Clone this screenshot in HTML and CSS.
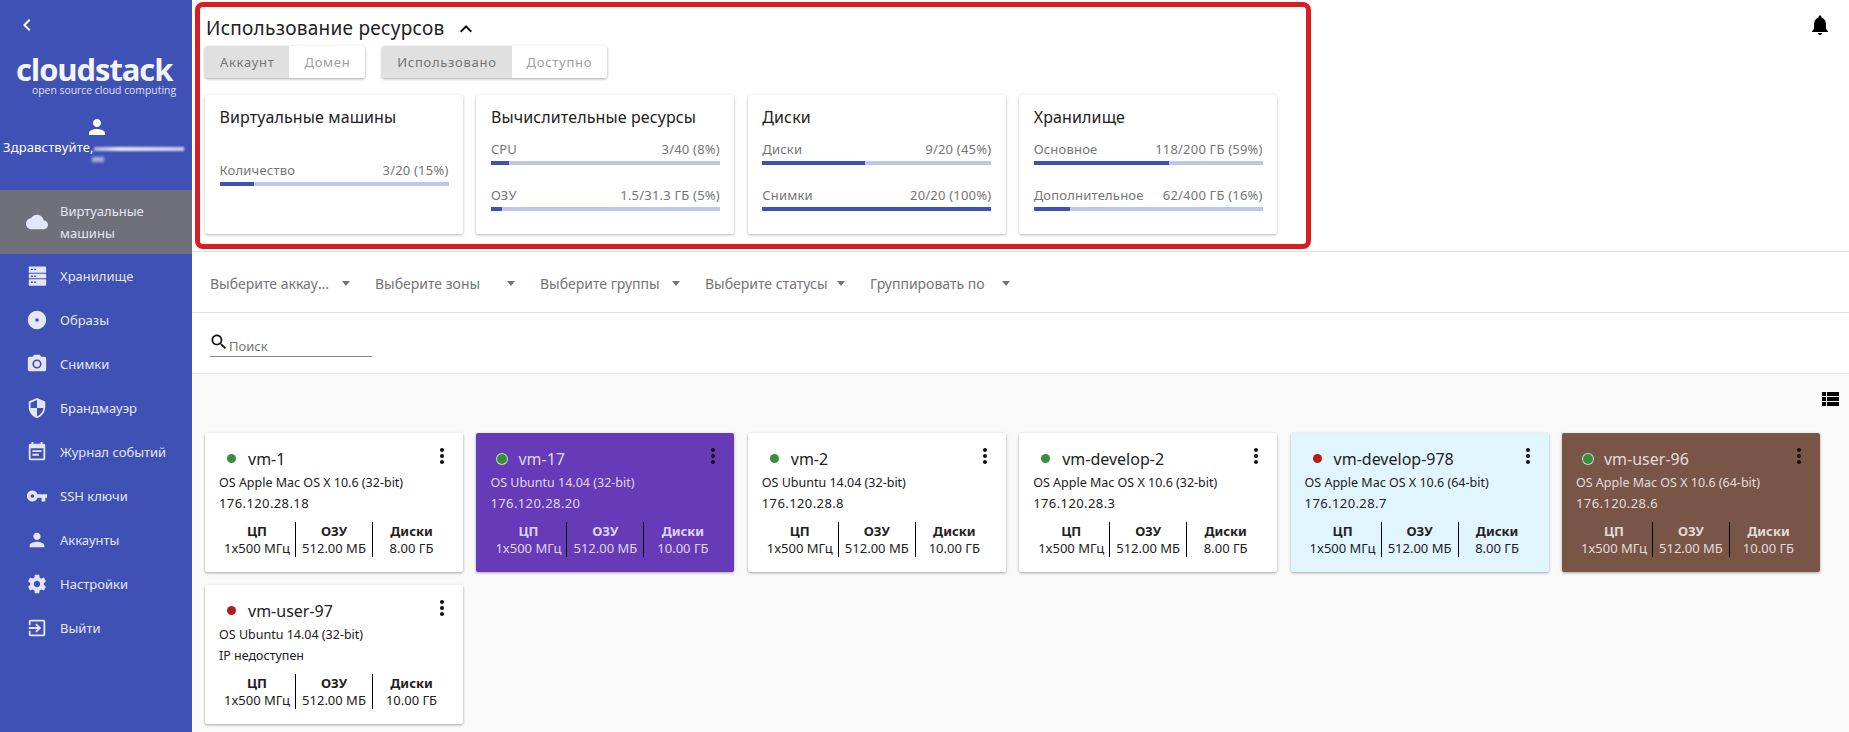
FILE: index.html
```html
<!DOCTYPE html>
<html lang="ru">
<head>
    <meta charset="UTF-8">
    <title>CloudStack</title>
    <link rel="stylesheet" href="styles.css">
</head>
<body>
    <aside class="sidebar">
        <svg class="back" viewBox="0 0 24 24"><path d="M15.41 7.41L14 6l-6 6 6 6 1.41-1.41L10.83 12z"/></svg>
        <div class="logo">cloudstack</div>
        <div class="logo-sub">open source cloud computing</div>
        <svg class="user-icon" viewBox="0 0 24 24"><path d="M12 12c2.21 0 4-1.79 4-4s-1.79-4-4-4-4 1.79-4 4 1.79 4 4 4zm0 2c-2.67 0-8 1.34-8 4v2h16v-2c0-2.66-5.33-4-8-4z"/></svg>
        <div class="hello">Здравствуйте, <span class="smear"></span></div>
        <div class="smear-small"></div>
        <nav class="nav">
            <a class="nav-item active">
                <svg viewBox="0 0 24 24"><path d="M19.35 10.04C18.67 6.59 15.64 4 12 4 9.11 4 6.6 5.64 5.35 8.04 2.34 8.36 0 10.91 0 14c0 3.31 2.69 6 6 6h13c2.76 0 5-2.24 5-5 0-2.64-2.05-4.78-4.65-4.96z"/></svg>
                <span>Виртуальные машины</span>
            </a>
            <a class="nav-item">
                <svg viewBox="0 0 24 24"><path fill-rule="evenodd" d="M4 1.5h17a1 1 0 0 1 1 1v5a1 1 0 0 1-1 1H4a1 1 0 0 1-1-1v-5a1 1 0 0 1 1-1zm1.5 2.5v1.5h2V4h-2zm3.5 0v1.5h2V4H9zM4 9.5h17a1 1 0 0 1 1 1v3a1 1 0 0 1-1 1H4a1 1 0 0 1-1-1v-3a1 1 0 0 1 1-1zm1.5 2v1.5h2v-1.5h-2zm3.5 0v1.5h2v-1.5H9zM4 15.5h17a1 1 0 0 1 1 1v5a1 1 0 0 1-1 1H4a1 1 0 0 1-1-1v-5a1 1 0 0 1 1-1zm1.5 2.5v1.5h2V18h-2zm3.5 0v1.5h2V18H9z"/></svg>
                <span>Хранилище</span>
            </a>
            <a class="nav-item">
                <svg viewBox="0 0 24 24"><path fill-rule="evenodd" d="M12 2C6.48 2 2 6.48 2 12s4.48 10 10 10 10-4.48 10-10S17.52 2 12 2zm0 8a2 2 0 1 1 0 4 2 2 0 0 1 0-4z"/></svg>
                <span>Образы</span>
            </a>
            <a class="nav-item">
                <svg viewBox="0 0 24 24"><circle cx="12" cy="12" r="3.2"/><path d="M9 2L7.17 4H4c-1.1 0-2 .9-2 2v12c0 1.1.9 2 2 2h16c1.1 0 2-.9 2-2V6c0-1.1-.9-2-2-2h-3.17L15 2H9zm3 15c-2.76 0-5-2.24-5-5s2.24-5 5-5 5 2.24 5 5-2.24 5-5 5z"/></svg>
                <span>Снимки</span>
            </a>
            <a class="nav-item">
                <svg viewBox="0 0 24 24"><path d="M12 1L3 5v6c0 5.55 3.84 10.74 9 12 5.16-1.26 9-6.45 9-12V5l-9-4zm0 10.99h7c-.53 4.12-3.28 7.79-7 8.94V12H5V6.3l7-3.11v8.8z"/></svg>
                <span>Брандмауэр</span>
            </a>
            <a class="nav-item">
                <svg viewBox="0 0 24 24"><path d="M17 10H7v2h10v-2zm2-7h-1V1h-2v2H8V1H6v2H5c-1.11 0-1.99.9-1.99 2L3 19c0 1.1.89 2 2 2h14c1.1 0 2-.9 2-2V5c0-1.1-.9-2-2-2zm0 16H5V8h14v11zm-5-5H7v2h7v-2z"/></svg>
                <span>Журнал событий</span>
            </a>
            <a class="nav-item">
                <svg viewBox="0 0 24 24"><path d="M12.65 10C11.83 7.67 9.61 6 7 6c-3.31 0-6 2.69-6 6s2.69 6 6 6c2.61 0 4.83-1.67 5.65-4H17v4h4v-4h2v-4H12.65zM7 14c-1.1 0-2-.9-2-2s.9-2 2-2 2 .9 2 2-.9 2-2 2z"/></svg>
                <span>SSH ключи</span>
            </a>
            <a class="nav-item">
                <svg viewBox="0 0 24 24"><path d="M12 12c2.21 0 4-1.79 4-4s-1.79-4-4-4-4 1.79-4 4 1.79 4 4 4zm0 2c-2.67 0-8 1.34-8 4v2h16v-2c0-2.66-5.33-4-8-4z"/></svg>
                <span>Аккаунты</span>
            </a>
            <a class="nav-item">
                <svg viewBox="0 0 24 24"><path d="M19.43 12.98c.04-.32.07-.64.07-.98s-.03-.66-.07-.98l2.11-1.65c.19-.15.24-.42.12-.64l-2-3.46c-.12-.22-.39-.3-.61-.22l-2.49 1c-.52-.4-1.08-.73-1.69-.98l-.38-2.65C14.46 2.18 14.25 2 14 2h-4c-.25 0-.46.18-.49.42l-.38 2.65c-.61.25-1.17.59-1.69.98l-2.49-1c-.23-.09-.49 0-.61.22l-2 3.46c-.13.22-.07.49.12.64l2.11 1.65c-.04.32-.07.65-.07.98s.03.66.07.98l-2.11 1.65c-.19.15-.24.42-.12.64l2 3.46c.12.22.39.3.61.22l2.49-1c.52.4 1.08.73 1.69.98l.38 2.65c.03.24.24.42.49.42h4c.25 0 .46-.18.49-.42l.38-2.65c.61-.25 1.17-.59 1.69-.98l2.49 1c.23.09.49 0 .61-.22l2-3.46c.12-.22.07-.49-.12-.64l-2.11-1.65zM12 15.5c-1.93 0-3.5-1.57-3.5-3.5s1.57-3.5 3.5-3.5 3.5 1.57 3.5 3.5-1.57 3.5-3.5 3.5z"/></svg>
                <span>Настройки</span>
            </a>
            <a class="nav-item">
                <svg viewBox="0 0 24 24"><path d="M10.09 15.59L11.5 17l5-5-5-5-1.41 1.41L12.67 11H3v2h9.67l-2.58 2.59zM19 3H5c-1.11 0-2 .9-2 2v4h2V5h14v14H5v-4H3v4c0 1.1.89 2 2 2h14c1.1 0 2-.9 2-2V5c0-1.1-.9-2-2-2z"/></svg>
                <span>Выйти</span>
            </a>
        </nav>
    </aside>

    <main class="main">
        <section class="usage">
            <div class="annotation"></div>
            <div class="usage-head">
                <h2 class="usage-title">Использование ресурсов</h2>
                <svg class="chevron" viewBox="0 0 24 24"><path d="M12 8l-6 6 1.41 1.41L12 10.83l4.59 4.58L18 14z"/></svg>
                <svg class="bell" viewBox="0 0 24 24"><path d="M12 22c1.1 0 2-.9 2-2h-4c0 1.1.89 2 2 2zm6-6v-5c0-3.07-1.64-5.64-4.5-6.32V4c0-.83-.67-1.5-1.5-1.5s-1.5.67-1.5 1.5v.68C7.63 5.36 6 7.92 6 11v5l-2 2v1h16v-1l-2-2z"/></svg>
            </div>
            <div class="toggles">
                <div class="toggle-group">
                    <span class="toggle toggle-on">Аккаунт</span>
                    <span class="toggle">Домен</span>
                </div>
                <div class="toggle-group">
                    <span class="toggle toggle-on">Использовано</span>
                    <span class="toggle">Доступно</span>
                </div>
            </div>
            <div class="res-cards">
                <div class="res-card">
                    <h3 class="res-title">Виртуальные машины</h3>
                    <div class="meter meter-single">
                        <div class="meter-label"><span>Количество</span><span>3/20 (15%)</span></div>
                        <div class="meter-bar"><div class="meter-fill" style="width: 15%"></div></div>
                    </div>
                </div>
                <div class="res-card">
                    <h3 class="res-title">Вычислительные ресурсы</h3>
                    <div class="meter">
                        <div class="meter-label"><span>CPU</span><span>3/40 (8%)</span></div>
                        <div class="meter-bar"><div class="meter-fill" style="width: 8%"></div></div>
                    </div>
                    <div class="meter">
                        <div class="meter-label"><span>ОЗУ</span><span>1.5/31.3 ГБ (5%)</span></div>
                        <div class="meter-bar"><div class="meter-fill" style="width: 5%"></div></div>
                    </div>
                </div>
                <div class="res-card">
                    <h3 class="res-title">Диски</h3>
                    <div class="meter">
                        <div class="meter-label"><span>Диски</span><span>9/20 (45%)</span></div>
                        <div class="meter-bar"><div class="meter-fill" style="width: 45%"></div></div>
                    </div>
                    <div class="meter">
                        <div class="meter-label"><span>Снимки</span><span>20/20 (100%)</span></div>
                        <div class="meter-bar"><div class="meter-fill" style="width: 100%"></div></div>
                    </div>
                </div>
                <div class="res-card">
                    <h3 class="res-title">Хранилище</h3>
                    <div class="meter">
                        <div class="meter-label"><span>Основное</span><span>118/200 ГБ (59%)</span></div>
                        <div class="meter-bar"><div class="meter-fill" style="width: 59%"></div></div>
                    </div>
                    <div class="meter">
                        <div class="meter-label"><span>Дополнительное</span><span>62/400 ГБ (16%)</span></div>
                        <div class="meter-bar"><div class="meter-fill" style="width: 16%"></div></div>
                    </div>
                </div>
            </div>
        </section>

        <section class="filters">
            <div class="filter"><span class="filter-text">Выберите аккаунты</span><i class="caret"></i></div>
            <div class="filter"><span class="filter-text">Выберите зоны</span><i class="caret"></i></div>
            <div class="filter"><span class="filter-text">Выберите группы</span><i class="caret"></i></div>
            <div class="filter"><span class="filter-text">Выберите статусы</span><i class="caret"></i></div>
            <div class="filter"><span class="filter-text">Группировать по</span><i class="caret"></i></div>
        </section>

        <section class="search-row">
            <div class="search">
                <svg viewBox="0 0 24 24"><path d="M15.5 14h-.79l-.28-.27C15.41 12.59 16 11.11 16 9.5 16 5.91 13.09 3 9.5 3S3 5.91 3 9.5 5.91 16 9.5 16c1.61 0 3.09-.59 4.23-1.57l.27.28v.79l5 4.99L20.49 19l-4.99-5zm-6 0C7.01 14 5 11.99 5 9.5S7.01 5 9.5 5 14 7.01 14 9.5 11.99 14 9.5 14z"/></svg>
                <span>Поиск</span>
            </div>
        </section>

        <section class="vm-area">
            <div class="view-bar">
                <svg viewBox="0 0 24 24"><path d="M4 14h4v-4H4v4zm0 5h4v-4H4v4zm0-10h4V5H4v4zm5 5h12v-4H9v4zm0 5h12v-4H9v4zM9 5v4h12V5H9z"/></svg>
            </div>
            <div class="vm-list">
                <div class="vm-card">
                    <div class="vm-head">
                        <i class="dot dot-on"></i><span class="vm-name">vm-1</span>
                        <svg class="more" viewBox="0 0 24 24"><path d="M12 8c1.1 0 2-.9 2-2s-.9-2-2-2-2 .9-2 2 .9 2 2 2zm0 2c-1.1 0-2 .9-2 2s.9 2 2 2 2-.9 2-2-.9-2-2-2zm0 6c-1.1 0-2 .9-2 2s.9 2 2 2 2-.9 2-2-.9-2-2-2z"/></svg>
                    </div>
                    <div class="vm-line">OS Apple Mac OS X 10.6 (32-bit)</div>
                    <div class="vm-line vm-ip">176.120.28.18</div>
                    <div class="vm-stats">
                        <div class="stat"><b>ЦП</b><span>1x500 МГц</span></div>
                        <div class="stat"><b>ОЗУ</b><span>512.00 МБ</span></div>
                        <div class="stat"><b>Диски</b><span>8.00 ГБ</span></div>
                    </div>
                </div>
                <div class="vm-card vm-purple">
                    <div class="vm-head">
                        <i class="dot dot-on"></i><span class="vm-name">vm-17</span>
                        <svg class="more" viewBox="0 0 24 24"><path d="M12 8c1.1 0 2-.9 2-2s-.9-2-2-2-2 .9-2 2 .9 2 2 2zm0 2c-1.1 0-2 .9-2 2s.9 2 2 2 2-.9 2-2-.9-2-2-2zm0 6c-1.1 0-2 .9-2 2s.9 2 2 2 2-.9 2-2-.9-2-2-2z"/></svg>
                    </div>
                    <div class="vm-line">OS Ubuntu 14.04 (32-bit)</div>
                    <div class="vm-line vm-ip">176.120.28.20</div>
                    <div class="vm-stats">
                        <div class="stat"><b>ЦП</b><span>1x500 МГц</span></div>
                        <div class="stat"><b>ОЗУ</b><span>512.00 МБ</span></div>
                        <div class="stat"><b>Диски</b><span>10.00 ГБ</span></div>
                    </div>
                </div>
                <div class="vm-card">
                    <div class="vm-head">
                        <i class="dot dot-on"></i><span class="vm-name">vm-2</span>
                        <svg class="more" viewBox="0 0 24 24"><path d="M12 8c1.1 0 2-.9 2-2s-.9-2-2-2-2 .9-2 2 .9 2 2 2zm0 2c-1.1 0-2 .9-2 2s.9 2 2 2 2-.9 2-2-.9-2-2-2zm0 6c-1.1 0-2 .9-2 2s.9 2 2 2 2-.9 2-2-.9-2-2-2z"/></svg>
                    </div>
                    <div class="vm-line">OS Ubuntu 14.04 (32-bit)</div>
                    <div class="vm-line vm-ip">176.120.28.8</div>
                    <div class="vm-stats">
                        <div class="stat"><b>ЦП</b><span>1x500 МГц</span></div>
                        <div class="stat"><b>ОЗУ</b><span>512.00 МБ</span></div>
                        <div class="stat"><b>Диски</b><span>10.00 ГБ</span></div>
                    </div>
                </div>
                <div class="vm-card">
                    <div class="vm-head">
                        <i class="dot dot-on"></i><span class="vm-name">vm-develop-2</span>
                        <svg class="more" viewBox="0 0 24 24"><path d="M12 8c1.1 0 2-.9 2-2s-.9-2-2-2-2 .9-2 2 .9 2 2 2zm0 2c-1.1 0-2 .9-2 2s.9 2 2 2 2-.9 2-2-.9-2-2-2zm0 6c-1.1 0-2 .9-2 2s.9 2 2 2 2-.9 2-2-.9-2-2-2z"/></svg>
                    </div>
                    <div class="vm-line">OS Apple Mac OS X 10.6 (32-bit)</div>
                    <div class="vm-line vm-ip">176.120.28.3</div>
                    <div class="vm-stats">
                        <div class="stat"><b>ЦП</b><span>1x500 МГц</span></div>
                        <div class="stat"><b>ОЗУ</b><span>512.00 МБ</span></div>
                        <div class="stat"><b>Диски</b><span>8.00 ГБ</span></div>
                    </div>
                </div>
                <div class="vm-card vm-blue">
                    <div class="vm-head">
                        <i class="dot dot-off"></i><span class="vm-name">vm-develop-978</span>
                        <svg class="more" viewBox="0 0 24 24"><path d="M12 8c1.1 0 2-.9 2-2s-.9-2-2-2-2 .9-2 2 .9 2 2 2zm0 2c-1.1 0-2 .9-2 2s.9 2 2 2 2-.9 2-2-.9-2-2-2zm0 6c-1.1 0-2 .9-2 2s.9 2 2 2 2-.9 2-2-.9-2-2-2z"/></svg>
                    </div>
                    <div class="vm-line">OS Apple Mac OS X 10.6 (64-bit)</div>
                    <div class="vm-line vm-ip">176.120.28.7</div>
                    <div class="vm-stats">
                        <div class="stat"><b>ЦП</b><span>1x500 МГц</span></div>
                        <div class="stat"><b>ОЗУ</b><span>512.00 МБ</span></div>
                        <div class="stat"><b>Диски</b><span>8.00 ГБ</span></div>
                    </div>
                </div>
                <div class="vm-card vm-brown">
                    <div class="vm-head">
                        <i class="dot dot-on"></i><span class="vm-name">vm-user-96</span>
                        <svg class="more" viewBox="0 0 24 24"><path d="M12 8c1.1 0 2-.9 2-2s-.9-2-2-2-2 .9-2 2 .9 2 2 2zm0 2c-1.1 0-2 .9-2 2s.9 2 2 2 2-.9 2-2-.9-2-2-2zm0 6c-1.1 0-2 .9-2 2s.9 2 2 2 2-.9 2-2-.9-2-2-2z"/></svg>
                    </div>
                    <div class="vm-line">OS Apple Mac OS X 10.6 (64-bit)</div>
                    <div class="vm-line vm-ip">176.120.28.6</div>
                    <div class="vm-stats">
                        <div class="stat"><b>ЦП</b><span>1x500 МГц</span></div>
                        <div class="stat"><b>ОЗУ</b><span>512.00 МБ</span></div>
                        <div class="stat"><b>Диски</b><span>10.00 ГБ</span></div>
                    </div>
                </div>
                <div class="vm-card">
                    <div class="vm-head">
                        <i class="dot dot-off"></i><span class="vm-name">vm-user-97</span>
                        <svg class="more" viewBox="0 0 24 24"><path d="M12 8c1.1 0 2-.9 2-2s-.9-2-2-2-2 .9-2 2 .9 2 2 2zm0 2c-1.1 0-2 .9-2 2s.9 2 2 2 2-.9 2-2-.9-2-2-2zm0 6c-1.1 0-2 .9-2 2s.9 2 2 2 2-.9 2-2-.9-2-2-2z"/></svg>
                    </div>
                    <div class="vm-line">OS Ubuntu 14.04 (32-bit)</div>
                    <div class="vm-line">IP недоступен</div>
                    <div class="vm-stats">
                        <div class="stat"><b>ЦП</b><span>1x500 МГц</span></div>
                        <div class="stat"><b>ОЗУ</b><span>512.00 МБ</span></div>
                        <div class="stat"><b>Диски</b><span>10.00 ГБ</span></div>
                    </div>
                </div>
            </div>
        </section>
    </main>
</body>
</html>
```

FILE: styles.css
```css
* {
    box-sizing: border-box;
}
body {
    margin: 0;
    height: 732px;
    overflow: hidden;
    display: flex;
    font-family: "Noto Sans", sans-serif;
    background-color: #fff;
    color: #212121;
}
svg {
    display: block;
    fill: currentColor;
    flex: none;
}

/* sidebar */
.sidebar {
    width: 192px;
    flex: none;
    background-color: #3f51b5;
    color: #fff;
    display: flex;
    flex-direction: column;
}
.back {
    width: 24px;
    height: 24px;
    margin: 13px 0 0 15px;
}
.logo {
    margin: 17px 0 0 16px;
    font-family: "Open Sans", sans-serif;
    font-weight: 700;
    font-size: 31px;
    line-height: 30px;
    letter-spacing: -1.1px;
    color: #f3f4fa;
}
.logo-sub {
    margin: 0 0 0 32px;
    font-family: "Open Sans", sans-serif;
    font-size: 10.4px;
    line-height: 12px;
    white-space: nowrap;
    color: #dfe2f3;
}
.user-icon {
    width: 24px;
    height: 24px;
    margin: 19px 0 0 85px;
}
.hello {
    margin: -1px 0 0 3px;
    font-size: 13px;
    line-height: 18px;
    letter-spacing: 0.15px;
    white-space: nowrap;
}
.smear {
    display: inline-block;
    width: 90px;
    height: 4px;
    margin-left: -3px;
    vertical-align: middle;
    background: linear-gradient(90deg, #aab3e2, #eceef9 30%, #c9cfee 100%);
    filter: blur(1px);
}
.smear-small {
    width: 12px;
    height: 5px;
    margin: 1px 0 0 92px;
    background-color: #aab3e2;
    filter: blur(1.5px);
}
.nav {
    margin-top: 28px;
    display: flex;
    flex-direction: column;
}
.nav-item {
    display: flex;
    align-items: center;
    gap: 12px;
    height: 44px;
    padding-left: 26px;
    font-size: 13px;
    line-height: 22px;
    color: #e3e6f6;
}
.nav-item svg {
    width: 22px;
    height: 22px;
}
.nav-item.active {
    height: 64px;
    background-color: #6f7079;
}

/* resource usage */
.main {
    flex: 1;
    min-width: 0;
    display: flex;
    flex-direction: column;
}
.usage {
    height: 252px;
    padding-left: 13px;
    border-bottom: 1px solid #e0e0e0;
    position: relative;
}
.annotation {
    position: absolute;
    left: 3px;
    top: 2px;
    width: 1116px;
    height: 247px;
    border: 5px solid #d81e24;
    border-radius: 8px;
}
.usage-head {
    display: flex;
    align-items: center;
    padding: 15px 17px 0 1px;
}
.usage-title {
    margin: 0;
    font-size: 19px;
    font-weight: 400;
    line-height: 24px;
    letter-spacing: 0.27px;
    color: #212121;
}
.chevron {
    width: 24px;
    height: 24px;
    margin-left: 10px;
    margin-top: 2px;
    color: #111;
}
.bell {
    width: 24px;
    height: 24px;
    margin: -6px 0 0 auto;
    color: #000;
}
.toggles {
    display: flex;
    gap: 17px;
    margin-top: 5px;
}
.toggle-group {
    display: flex;
    height: 32px;
    border-radius: 2px;
    background-color: #fff;
    box-shadow: 0 1px 3px rgba(0, 0, 0, 0.35);
}
.toggle {
    display: flex;
    align-items: center;
    padding: 0 15px;
    font-size: 13px;
    letter-spacing: 0.7px;
    color: #a0a0a0;
}
.toggle-on {
    background-color: #e0e0e0;
    color: #757575;
    border-radius: 2px 0 0 2px;
}
.res-cards {
    display: flex;
    gap: 13.4px;
    margin-top: 17px;
}
.res-card {
    width: 258px;
    height: 139px;
    padding: 11px 14.5px 0;
    background-color: #fff;
    border-radius: 2px;
    box-shadow: 0 1px 3px rgba(0, 0, 0, 0.3);
}
.res-title {
    margin: 0 0 12px;
    font-size: 16px;
    font-weight: 400;
    line-height: 22px;
    letter-spacing: 0.12px;
}
.meter {
    margin-bottom: 21px;
}
.meter-single {
    margin-top: 33px;
}
.meter-label {
    display: flex;
    justify-content: space-between;
    font-size: 13px;
    line-height: 18px;
    letter-spacing: 0.2px;
    margin-bottom: 3px;
    color: #757575;
}
.meter-bar {
    height: 4px;
    background-color: #c0c6e7;
}
.meter-fill {
    height: 100%;
    background-color: #3f51b5;
}

/* filters and search */
.filters {
    height: 61px;
    display: flex;
    gap: 15px;
    align-items: center;
    padding: 3px 0 0 18px;
    border-bottom: 1px solid #e0e0e0;
}
.filter {
    width: 150px;
    display: flex;
    align-items: center;
    justify-content: space-between;
    padding-right: 10px;
    font-size: 14px;
    color: #757575;
}
.filter-text {
    width: 124px;
    overflow: hidden;
    text-overflow: ellipsis;
    white-space: nowrap;
}
.caret {
    width: 0;
    height: 0;
    border: 4px solid transparent;
    border-top: 5px solid #757575;
    border-bottom: 0;
}
.search-row {
    height: 61px;
    padding: 19px 0 0 18px;
    border-bottom: 1px solid #e0e0e0;
}
.search {
    width: 162px;
    height: 25px;
    display: flex;
    align-items: flex-start;
    border-bottom: 1px solid #888;
    font-size: 13px;
    color: #757575;
}
.search svg {
    width: 20px;
    height: 20px;
    margin-left: -1px;
    color: #111;
}
.search span {
    line-height: 18px;
    padding-top: 5px;
}

/* vm cards */
.vm-area {
    flex: 1;
    background-color: #fafafa;
    padding: 13px 7px 0 13px;
}
.view-bar {
    display: flex;
    justify-content: flex-end;
    height: 24px;
    margin-bottom: 22px;
    color: #000;
}
.view-bar svg {
    width: 24px;
    height: 24px;
}
.vm-list {
    display: flex;
    flex-wrap: wrap;
    gap: 13px 13.4px;
}
.vm-card {
    width: 258px;
    height: 139px;
    padding: 12px 15px 0 14px;
    background-color: #fff;
    color: #212121;
    border-radius: 2px;
    box-shadow: 0 1px 3px rgba(0, 0, 0, 0.35);
}
.vm-purple {
    background-color: #673ab7;
    color: rgba(255, 255, 255, 0.8);
}
.vm-blue {
    background-color: #e1f5fe;
}
.vm-brown {
    background-color: #795548;
    color: rgba(255, 255, 255, 0.8);
}
.vm-head {
    display: flex;
    align-items: center;
    height: 27px;
}
.dot {
    width: 9px;
    height: 9px;
    margin: 0 12px 0 8px;
    border-radius: 50%;
    flex: none;
}
.dot-on {
    background-color: #388e3c;
}
.dot-off {
    background-color: #b71c1c;
}
.vm-purple .dot,
.vm-brown .dot {
    width: 12px;
    height: 12px;
    margin: 0 10px 0 6px;
    border: 1px solid rgba(255, 255, 255, 0.7);
}
.vm-name {
    font-size: 16px;
    line-height: 22px;
}
.more {
    width: 24px;
    height: 24px;
    margin: -6px -6px 0 auto;
    color: #111;
}
.vm-line {
    font-size: 12.5px;
    line-height: 21px;
    white-space: nowrap;
}
.vm-ip {
    font-size: 13px;
    letter-spacing: 0.4px;
}
.vm-stats {
    display: grid;
    grid-template-columns: repeat(3, 77px);
    margin-top: 8px;
}
.stat {
    display: flex;
    flex-direction: column;
    align-items: center;
    height: 35px;
    font-size: 13px;
    white-space: nowrap;
    border-right: 1px solid #000;
}
.stat:last-child {
    border-right: 0;
}
.stat b {
    line-height: 18px;
}
.stat span {
    line-height: 17px;
}
```
